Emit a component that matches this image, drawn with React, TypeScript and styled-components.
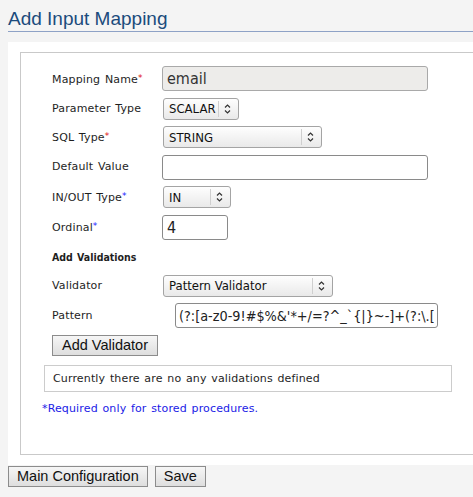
import React from "react";
import styled, { createGlobalStyle } from "styled-components";

const GlobalStyle = createGlobalStyle`
  html, body {
    margin: 0;
    padding: 0;
    overflow: hidden;
    background: #f4f4f4;
  }
  body {
    font-family: "DejaVu Sans", Verdana, sans-serif;
    font-size: 11px;
    color: #1e1e1e;
  }
`;

const Page = styled.div`
  width: 600px;
  padding: 8px 0 0 8px;
`;

const Title = styled.h1`
  margin: 0 0 10px 0;
  padding: 0 0 1px 0;
  font-family: "Liberation Sans", Arial, sans-serif;
  font-weight: normal;
  font-size: 19px;
  line-height: 22px;
  color: #1b4b7c;
  border-bottom: 1px solid #8ea2c6;
`;

const Panel = styled.div`
  background: #ffffff;
  padding: 10px 0 10px 12px;
`;

const Box = styled.div`
  border: 1px solid #c9c9c9;
  padding: 13px 0 38px 0;
`;

const Form = styled.div`
  display: grid;
  grid-template-columns: 110px auto;
  row-gap: 6.5px;
  align-items: center;
  justify-items: start;
  padding-left: 31px;
`;

const Label = styled.label`
  font-size: 11px;
  line-height: 14px;
  letter-spacing: 0.15px;
  word-spacing: 1px;
  color: #1e1e1e;
`;

const Star = styled.span<{ $blue?: boolean }>`
  color: ${(p) => (p.$blue ? "#1a1aff" : "#e01010")};
  font-size: 9px;
  vertical-align: 2px;
`;

const Section = styled.div`
  grid-column: 1 / -1;
  height: 22px;
  line-height: 22px;
  font-family: "DejaVu Sans Condensed", "DejaVu Sans", sans-serif;
  font-weight: bold;
  font-size: 10.5px;
  word-spacing: 1px;
`;

const TextInput = styled.input<{ $w: number; $indent?: number }>`
  box-sizing: border-box;
  width: ${(p) => p.$w}px;
  height: 25px;
  margin-left: ${(p) => p.$indent || 0}px;
  padding: 0 4px;
  border: 1px solid #8a8a8a;
  border-radius: 3px;
  background: #ffffff;
  font-family: "DejaVu Sans Condensed", "DejaVu Sans", sans-serif;
  font-size: 16px;
  color: #222;
  outline: none;

  &:disabled {
    background: #edecea;
    border-color: #a9a9a9;
    color: #333;
  }
`;

const PatternInput = styled(TextInput)`
  font-size: 14.3px;
  padding: 0 3px;
`;

const SelectWrap = styled.span<{ $w: number }>`
  position: relative;
  display: inline-block;
  width: ${(p) => p.$w}px;
  height: 22px;
  margin-left: 1px;
`;

const Select = styled.select`
  appearance: none;
  -webkit-appearance: none;
  box-sizing: border-box;
  width: 100%;
  height: 100%;
  margin: 0;
  padding: 0 19px 0 5px;
  border: 1px solid #a4a4a4;
  border-radius: 3px;
  background: linear-gradient(#fefefe, #e9e9e9);
  font-family: "DejaVu Sans Condensed", "DejaVu Sans", sans-serif;
  font-size: 13px;
  color: #111;
  outline: none;
`;

const Arrow = styled.svg`
  position: absolute;
  top: 0;
  right: 1px;
  pointer-events: none;
`;

const Button = styled.button<{ $pad?: number }>`
  height: 21px;
  margin: 0;
  padding: 0 ${(p) => p.$pad || 8}px;
  border: 1px solid #8c8c8c;
  border-radius: 0;
  background: linear-gradient(#f6f6f6, #dedede);
  font-family: "Liberation Sans", Arial, sans-serif;
  font-size: 14.5px;
  line-height: 19px;
  color: #111;
`;

const AddButton = styled(Button)`
  grid-column: 1 / -1;
  margin-top: 0.5px;
`;

const Validations = styled.div`
  width: 408px;
  box-sizing: border-box;
  margin: 9px 0 0 23px;
  padding: 6px 8px;
  border: 1px solid #cccccc;
  line-height: 13px;
  letter-spacing: 0.15px;
  word-spacing: 1px;
`;

const Note = styled.div`
  margin: 10px 0 0 21px;
  line-height: 14px;
  letter-spacing: 0.15px;
  word-spacing: 1px;
  color: #1a1ae6;
`;

const Actions = styled.div`
  display: flex;
  gap: 7px;
  margin-top: 1px;
`;

const Dropdown = ({ w, value, options }: { w: number; value: string; options: string[] }) => (
  <SelectWrap $w={w}>
    <Select defaultValue={value}>
      {options.map((o) => (
        <option key={o}>{o}</option>
      ))}
    </Select>
    <Arrow width="20" height="22" viewBox="0 0 20 22">
      <line x1="0.5" y1="3" x2="0.5" y2="19" stroke="#cfcfcf" />
      <path d="M7 9.5 L9.5 7 L12 9.5" fill="none" stroke="#333" strokeWidth="1.2" />
      <path d="M7 12.5 L9.5 15 L12 12.5" fill="none" stroke="#333" strokeWidth="1.2" />
    </Arrow>
  </SelectWrap>
);

const PATTERN =
  "(?:[a-z0-9!#$%&'*+/=?^_`{|}~-]+(?:\\.[a-z0-9!#$%&'*+/=?^_`{|}~-]+)*|\"(?:[\\x01-\\x08])*\")@";

const App = (): JSX.Element => (
  <Page>
    <GlobalStyle />
    <Title>Add Input Mapping</Title>
    <Panel>
      <Box>
        <Form>
          <Label>
            Mapping Name<Star>*</Star>
          </Label>
          <TextInput $w={266} defaultValue="email" disabled />

          <Label>Parameter Type</Label>
          <Dropdown w={76} value="SCALAR" options={["SCALAR", "ARRAY"]} />

          <Label>
            SQL Type<Star>*</Star>
          </Label>
          <Dropdown w={159} value="STRING" options={["STRING", "INTEGER", "DOUBLE", "DATE"]} />

          <Label>Default Value</Label>
          <TextInput $w={266} />

          <Label>
            IN/OUT Type<Star $blue>*</Star>
          </Label>
          <Dropdown w={68} value="IN" options={["IN", "OUT", "INOUT"]} />

          <Label>
            Ordinal<Star $blue>*</Star>
          </Label>
          <TextInput $w={66} defaultValue="4" />

          <Section>Add Validations</Section>

          <Label>Validator</Label>
          <Dropdown w={170} value="Pattern Validator" options={["Pattern Validator", "Length Validator"]} />

          <Label>Pattern</Label>
          <PatternInput $w={263} $indent={13} defaultValue={PATTERN} />

          <AddButton $pad={9}>Add Validator</AddButton>
        </Form>
        <Validations>Currently there are no any validations defined</Validations>
        <Note>*Required only for stored procedures.</Note>
      </Box>
    </Panel>
    <Actions>
      <Button>Main Configuration</Button>
      <Button>Save</Button>
    </Actions>
  </Page>
);

export default App;
